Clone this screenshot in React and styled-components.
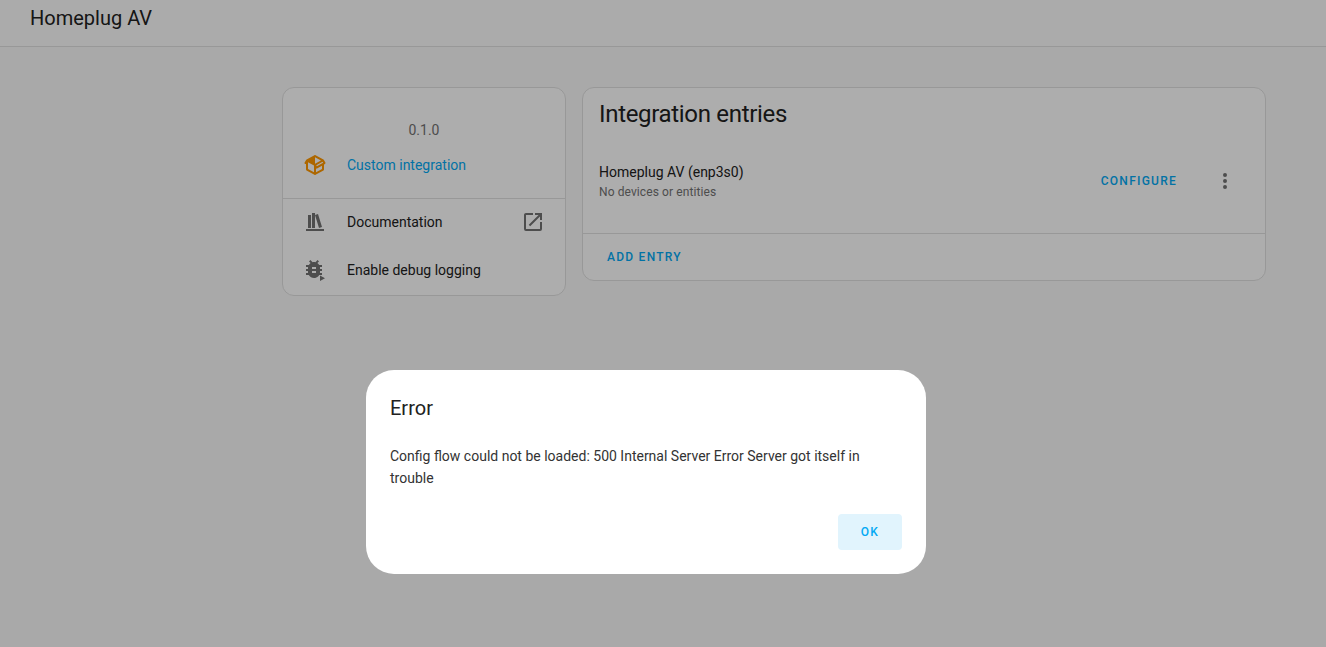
import React from "react";
import styled, { createGlobalStyle } from "styled-components";

const Global = createGlobalStyle`
  html, body { margin: 0; padding: 0; height: 100%; overflow: hidden; }
  body { background: #fafafa; font-family: Roboto, "Liberation Sans", sans-serif; color: #212121; }
  * { box-sizing: border-box; }
`;

const Page = styled.div`
  height: 647px;
  display: flex;
  flex-direction: column;
`;
const Header = styled.header`
  height: 47px;
  flex: none;
  padding: 5px 30px 0;
  background: #fdfdfd;
  border-bottom: 1px solid #e0e0e0;
  font-size: 20px;
  line-height: 27px;
`;
const Content = styled.main`
  display: flex;
  align-items: flex-start;
  gap: 16px;
  padding: 40px 0 0 282px;
`;
const Card = styled.section`
  background: #fff;
  border: 1px solid #e0e0e0;
  border-radius: 12px;
  width: ${(p) => p.$width}px;
`;
const Version = styled.div`
  padding-top: 32px;
  text-align: center;
  font-size: 14px;
  line-height: 20px;
  color: #727272;
`;
const InfoRow = styled.div`
  display: flex;
  align-items: center;
  height: 48px;
  padding: 0 20px;
  margin-top: 1px;
  margin-bottom: 9px;
`;
const LinkList = styled.div`
  margin-top: -1px;
  padding-bottom: 1px;
`;
const LinkRow = styled.div`
  display: flex;
  align-items: center;
  height: 48px;
  padding: 0 20px;
`;
const Divider = styled.div`
  height: 1px;
  background: #e0e0e0;
`;
const IconBox = styled.svg`
  width: 24px;
  height: 24px;
  flex: none;
  fill: ${(p) => p.$color || "#727272"};
`;
const RowText = styled.span`
  flex: 1;
  margin-left: 20px;
  font-size: 14px;
  line-height: 20px;
  color: ${(p) => p.$color || "#212121"};
`;
const EntriesTitle = styled.h2`
  margin: 0;
  padding: 9px 16px 0;
  font-size: 24px;
  font-weight: 400;
  letter-spacing: -0.32px;
  line-height: 34px;
`;
const Entry = styled.div`
  display: flex;
  align-items: center;
  height: 102px;
  padding: 0 16px;
`;
const EntryInfo = styled.div`
  flex: 1;
  margin-top: -1px;
`;
const EntryName = styled.div`
  font-size: 14px;
  line-height: 20px;
`;
const EntrySub = styled.div`
  font-size: 12px;
  letter-spacing: 0.1px;
  line-height: 20px;
  color: #727272;
`;
const TextButton = styled.span`
  font-size: 12px;
  font-weight: 500;
  letter-spacing: 1.25px;
  line-height: 20px;
  color: #03a9f4;
`;
const EntryActions = styled.div`
  display: flex;
  align-items: center;
  gap: 36px;
  padding-right: 12px;
  margin-top: -3px;
`;
const CardActions = styled.div`
  display: flex;
  align-items: center;
  height: 46px;
  padding: 0 24px;
`;
const Scrim = styled.div`
  position: fixed;
  inset: 0;
  background: rgba(0, 0, 0, 0.32);
`;
const Dialog = styled.div`
  position: fixed;
  left: 366px;
  top: 370px;
  width: 560px;
  height: 204px;
  background: #fff;
  border-radius: 28px;
  padding: 24px;
  display: flex;
  flex-direction: column;
`;
const DialogTitle = styled.h3`
  margin: 0;
  font-size: 20px;
  font-weight: 400;
  line-height: 28px;
  color: #212121;
`;
const DialogBody = styled.p`
  margin: 23px 0 0;
  font-size: 14px;
  line-height: 22px;
  color: #333;
`;
const DialogActions = styled.div`
  margin-top: auto;
  display: flex;
  justify-content: flex-end;
`;
const OkButton = styled.button`
  width: 64px;
  height: 36px;
  border: 0;
  border-radius: 4px;
  background: #e1f4fd;
  color: #03a9f4;
  font-family: inherit;
  font-size: 12px;
  font-weight: 500;
  letter-spacing: 1.25px;
`;

const Icon = ({ d, color }) => (
  <IconBox viewBox="0 0 24 24" $color={color}>
    <path d={d} />
  </IconBox>
);

const PACKAGE = "M2,10.96C1.5,10.68 1.35,10.07 1.63,9.59L3.13,7C3.24,6.8 3.41,6.66 3.6,6.58L11.43,2.18C11.59,2.06 11.79,2 12,2C12.21,2 12.41,2.06 12.57,2.18L20.47,6.62C20.66,6.72 20.82,6.88 20.91,7.08L22.36,9.6C22.64,10.08 22.47,10.69 22,10.96L21,11.54V16.5C21,16.88 20.79,17.21 20.47,17.38L12.57,21.82C12.41,21.94 12.21,22 12,22C11.79,22 11.59,21.94 11.43,21.82L3.53,17.38C3.21,17.21 3,16.88 3,16.5V10.96C2.7,11.13 2.32,11.14 2,10.96M12,4.15V4.15L12,10.85V10.85L17.96,7.5L12,4.15M5,15.91L11,19.29V12.58L5,9.21V15.91M19,15.91V12.69L14,15.59C13.67,15.77 13.3,15.76 13,15.6V19.29L19,15.91M13.85,13.36L20.13,9.73L19.55,8.72L13.27,12.35L13.85,13.36Z";
const BOOKSHELF = "M9 3V18H12V3H9M12 5L16 18L19 17L15 4L12 5M5 5V18H8V5H5M3 19V21H21V19H3Z";
const OPEN = "M14,3V5H17.59L7.76,14.83L9.17,16.24L19,6.41V10H21V3M19,19H5V5H12V3H5C3.89,3 3,3.9 3,5V19A2,2 0 0,0 5,21H19A2,2 0 0,0 21,19V12H19V19Z";
const DOTS = "M12,16A2,2 0 0,1 14,18A2,2 0 0,1 12,20A2,2 0 0,1 10,18A2,2 0 0,1 12,16M12,10A2,2 0 0,1 14,12A2,2 0 0,1 12,14A2,2 0 0,1 10,12A2,2 0 0,1 12,10M12,4A2,2 0 0,1 14,6A2,2 0 0,1 12,8A2,2 0 0,1 10,6A2,2 0 0,1 12,4Z";
const BUG = "M13,11H9V9H13M13,15H9V13H13M19,7H16.19C15.74,6.22 15.12,5.55 14.37,5.04L16,3.41L14.59,2L12.42,4.17C11.96,4.06 11.5,4 11,4C10.5,4 10.04,4.06 9.59,4.17L7.41,2L6,3.41L7.62,5.04C6.88,5.55 6.26,6.22 5.81,7H3V9H5.09C5.04,9.33 5,9.66 5,10V11H3V13H5V14C5,14.34 5.04,14.67 5.09,15H3V17H5.81C7.2,19.4 10.1,20.5 12.9,19.7C14,19.4 15.5,18.5 16.19,17H19V15H16.91C16.96,14.67 17,14.34 17,14V13H19V11H17V10C17,9.66 16.96,9.33 16.91,9H19V7Z M17,17.5V23L22,20.2Z";

export default function App() {
  return (
    <Page>
      <Global />
      <Header>Homeplug AV</Header>
      <Content>
        <Card $width={284}>
          <Version>0.1.0</Version>
          <InfoRow>
            <Icon d={PACKAGE} color="#ff9800" />
            <RowText $color="#03a9f4">Custom integration</RowText>
          </InfoRow>
          <Divider />
          <LinkList>
            <LinkRow>
              <Icon d={BOOKSHELF} />
              <RowText>Documentation</RowText>
              <Icon d={OPEN} />
            </LinkRow>
            <LinkRow>
              <Icon d={BUG} />
              <RowText>Enable debug logging</RowText>
            </LinkRow>
          </LinkList>
        </Card>
        <Card $width={684}>
          <EntriesTitle>Integration entries</EntriesTitle>
          <Entry>
            <EntryInfo>
              <EntryName>Homeplug AV (enp3s0)</EntryName>
              <EntrySub>No devices or entities</EntrySub>
            </EntryInfo>
            <EntryActions>
              <TextButton>CONFIGURE</TextButton>
              <Icon d={DOTS} />
            </EntryActions>
          </Entry>
          <Divider />
          <CardActions>
            <TextButton>ADD ENTRY</TextButton>
          </CardActions>
        </Card>
      </Content>
      <Scrim />
      <Dialog role="alertdialog">
        <DialogTitle>Error</DialogTitle>
        <DialogBody>Config flow could not be loaded: 500 Internal Server Error Server got itself in trouble</DialogBody>
        <DialogActions>
          <OkButton>OK</OkButton>
        </DialogActions>
      </Dialog>
    </Page>
  );
}
